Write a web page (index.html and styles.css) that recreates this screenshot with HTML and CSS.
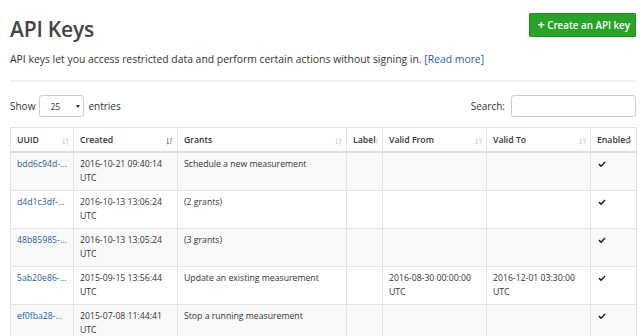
FILE: index.html
```html
<!DOCTYPE html>
<html>
<head>
<meta charset="utf-8">
<link rel="stylesheet" href="styles.css">
</head>
<body>
<div class="page">
  <div class="head">
    <h1 class="title">API Keys</h1>
    <a class="btn-create"><span class="plus">+</span> Create an API key</a>
  </div>
  <p class="lead">API keys let you access restricted data and perform certain actions without signing in. <a class="link">[Read more]</a></p>
  <div class="rule"></div>
  <div class="controls">
    <div class="length">Show
      <span class="select"><span class="sel-val">25</span><span class="caret"></span></span>
      entries</div>
    <div class="search">Search: <span class="input"></span></div>
  </div>
  <table class="grid">
    <colgroup>
      <col style="width:63px"><col style="width:104px"><col style="width:169px"><col style="width:36px"><col style="width:104px"><col style="width:104px"><col style="width:46px">
    </colgroup>
    <thead>
      <tr>
        <th>UUID<svg class="sort" viewBox="0 0 8 8"><path d="M2 0v7M0.5 5.5L2 7 3.5 5.5M6 8V1M4.5 2.5L6 1 7.5 2.5" stroke="#ccc" fill="none" stroke-width="1"/></svg></th>
        <th>Created<svg class="sort" viewBox="0 0 8 8"><path d="M2 0v7M0.5 5.5L2 7 3.5 5.5M4.5 1h3M4.5 3.5h2.5M4.5 6h1.5" stroke="#777" fill="none" stroke-width="1"/></svg></th>
        <th>Grants<svg class="sort" viewBox="0 0 8 8"><path d="M2 0v7M0.5 5.5L2 7 3.5 5.5M6 8V1M4.5 2.5L6 1 7.5 2.5" stroke="#ccc" fill="none" stroke-width="1"/></svg></th>
        <th class="tight">Label<svg class="sort" viewBox="0 0 8 8"><path d="M2 0v7M0.5 5.5L2 7 3.5 5.5M6 8V1M4.5 2.5L6 1 7.5 2.5" stroke="#ccc" fill="none" stroke-width="1"/></svg></th>
        <th>Valid From<svg class="sort" viewBox="0 0 8 8"><path d="M2 0v7M0.5 5.5L2 7 3.5 5.5M6 8V1M4.5 2.5L6 1 7.5 2.5" stroke="#ccc" fill="none" stroke-width="1"/></svg></th>
        <th>Valid To<svg class="sort" viewBox="0 0 8 8"><path d="M2 0v7M0.5 5.5L2 7 3.5 5.5M6 8V1M4.5 2.5L6 1 7.5 2.5" stroke="#ccc" fill="none" stroke-width="1"/></svg></th>
        <th class="tight">Enabled<svg class="sort" viewBox="0 0 8 8"><path d="M2 0v7M0.5 5.5L2 7 3.5 5.5M6 8V1M4.5 2.5L6 1 7.5 2.5" stroke="#ccc" fill="none" stroke-width="1"/></svg></th>
      </tr>
    </thead>
    <tbody>
      <tr><td><a class="link">bdd6c94d-...</a></td><td>2016-10-21 09:40:14 UTC</td><td>Schedule a new measurement</td><td></td><td></td><td></td><td><svg class="check" viewBox="0 0 10 8"><path d="M1 4.2L3.8 7 9 1.3" stroke="#222" stroke-width="2" fill="none"/></svg></td></tr>
      <tr><td><a class="link">d4d1c3df-...</a></td><td>2016-10-13 13:06:24 UTC</td><td>(2 grants)</td><td></td><td></td><td></td><td><svg class="check" viewBox="0 0 10 8"><path d="M1 4.2L3.8 7 9 1.3" stroke="#222" stroke-width="2" fill="none"/></svg></td></tr>
      <tr><td><a class="link">48b85985-...</a></td><td>2016-10-13 13:05:24 UTC</td><td>(3 grants)</td><td></td><td></td><td></td><td><svg class="check" viewBox="0 0 10 8"><path d="M1 4.2L3.8 7 9 1.3" stroke="#222" stroke-width="2" fill="none"/></svg></td></tr>
      <tr><td><a class="link">5ab20e86-...</a></td><td>2015-09-15 13:56:44 UTC</td><td>Update an existing measurement</td><td></td><td>2016-08-30 00:00:00 UTC</td><td>2016-12-01 03:30:00 UTC</td><td><svg class="check" viewBox="0 0 10 8"><path d="M1 4.2L3.8 7 9 1.3" stroke="#222" stroke-width="2" fill="none"/></svg></td></tr>
      <tr><td><a class="link">ef0fba28-...</a></td><td>2015-07-08 11:44:41 UTC</td><td>Stop a running measurement</td><td></td><td></td><td></td><td><svg class="check" viewBox="0 0 10 8"><path d="M1 4.2L3.8 7 9 1.3" stroke="#222" stroke-width="2" fill="none"/></svg></td></tr>
    </tbody>
  </table>
</div>
</body>
</html>
```

FILE: styles.css
```css
html, body {
  margin: 0;
  padding: 0;
  background: #fff;
  overflow: hidden;
}
body {
  font-family: "Open Sans", "DejaVu Sans", sans-serif;
  color: #333;
  font-size: 10px;
}
.page {
  padding: 0 4px 0 10px;
}
.head {
  display: flex;
  justify-content: space-between;
  align-items: flex-start;
  padding-top: 13px;
}
.title {
  margin: 2px 0 0 0;
  font-size: 21px;
  font-weight: 600;
  color: #444;
  line-height: 28px;
  letter-spacing: -0.2px;
}
.btn-create {
  display: inline-block;
  background: #27a327;
  border: 1px solid #1f8f1f;
  color: #fff;
  font-weight: 600;
  font-size: 9.8px;
  height: 22px;
  line-height: 22px;
  padding: 0 5px 0 8px;
  border-radius: 1px;
}
.plus {
  font-weight: 700;
  font-size: 12px;
}
.lead {
  margin: 9px 0 0 0;
  font-size: 10.4px;
  line-height: 14px;
  color: #333;
}
.link {
  color: #2a5d9e;
  text-decoration: none;
}
.rule {
  margin-top: 14px;
  height: 2px;
  background: #f2f2f2;
}
.controls {
  display: flex;
  justify-content: space-between;
  align-items: center;
  margin-top: 13px;
  font-size: 10px;
}
.length {
  display: flex;
  align-items: center;
  gap: 4px;
}
.select {
  display: inline-flex;
  align-items: center;
  justify-content: space-between;
  width: 45px;
  height: 22px;
  box-sizing: border-box;
  border: 1px solid #ccc;
  border-radius: 3px;
  padding: 0 3px 0 10px;
  font-size: 8.5px;
  background: #fff;
}
.caret {
  width: 0;
  height: 0;
  border-left: 2.5px solid transparent;
  border-right: 2.5px solid transparent;
  border-top: 3px solid #333;
}
.search {
  display: flex;
  align-items: center;
  gap: 6px;
}
.input {
  display: inline-block;
  width: 125px;
  height: 22px;
  box-sizing: border-box;
  border: 1px solid #ccc;
  border-radius: 3px;
  background: #fff;
}
.grid {
  margin-top: 10px;
  width: 626px;
  border-collapse: collapse;
  table-layout: fixed;
  font-size: 8.7px;
}
.grid th, .grid td {
  border: 1px solid #e4e4e4;
  text-align: left;
  vertical-align: top;
}
.grid th {
  font-weight: 600;
  color: #333;
  padding: 6px 6px 5px 6px;
  height: 12px;
  line-height: 12px;
  border-bottom: 2px solid #ddd;
  position: relative;
  white-space: nowrap;
  overflow: hidden;
}
.grid th.tight {
  padding-left: 6px;
  padding-right: 0;
}
.sort {
  position: absolute;
  right: 4px;
  top: 10px;
  width: 7px;
  height: 7px;
}
.grid td {
  padding: 5px 6px;
  line-height: 13.5px;
  height: 26.5px;
}
.grid tbody tr:nth-child(odd) td {
  background: #f9f9f9;
}
.check {
  width: 8px;
  height: 6px;
  margin-top: 3px;
  margin-left: 1px;
}
```
